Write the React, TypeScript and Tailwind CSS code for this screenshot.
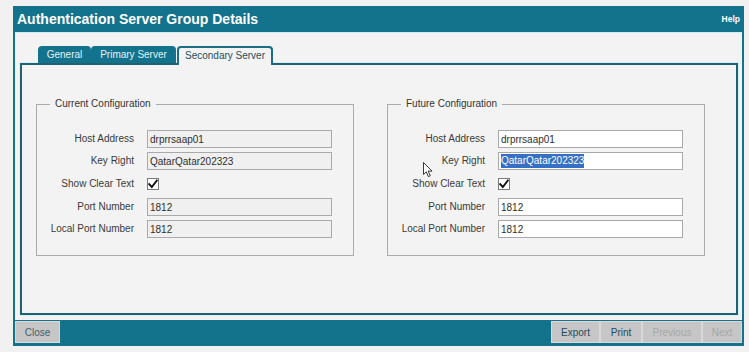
import React from "react";

const Check = () => (
  <div className="w-[12px] h-[12px] bg-white border border-[#7a7a7a] flex items-center justify-center">
    <svg width="10" height="10" viewBox="0 0 10 10">
      <path d="M1.2 5.2 L3.8 8 L8.8 1.6" fill="none" stroke="#111" strokeWidth="1.9" strokeLinecap="square" />
    </svg>
  </div>
);

type Row = { label: string; value?: string; checkbox?: boolean };

const rows: Row[] = [
  { label: "Host Address", value: "drprrsaap01" },
  { label: "Key Right", value: "QatarQatar202323" },
  { label: "Show Clear Text", checkbox: true },
  { label: "Port Number", value: "1812" },
  { label: "Local Port Number", value: "1812" },
];

function Config({ title, disabled, withCursor }: { title: string; disabled: boolean; withCursor?: boolean }) {
  return (
    <fieldset className="relative w-[318px] border border-[#ababab] p-0 pt-[20px] pb-[17px] m-0">
      <legend className="ml-[13px] px-[5px] text-[10px] leading-[12px] text-[#333]">{title}</legend>
      <div className="flex flex-col gap-[4px]">
        {rows.map((r) => (
          <div key={r.label} className={`flex items-center gap-[13px] ${r.checkbox ? "h-[20px]" : "h-[18px]"}`}>
            <div className="w-[97px] text-right text-[10px] text-[#3a3a3a] leading-none">{r.label}</div>
            {r.checkbox ? (
              <Check />
            ) : (
              <div
                className={`w-[185px] h-[18px] border border-[#a9a9a9] pl-[2px] flex items-center text-[10px] text-[#2e2e2e] ${
                  disabled ? "bg-[#f0f0f0]" : "bg-white"
                }`}
              >
                {!disabled && r.label === "Key Right" ? (
                  <span className="bg-[#3570c4] text-white leading-[14px]">{r.value}</span>
                ) : (
                  r.value
                )}
              </div>
            )}
          </div>
        ))}
      </div>
      {withCursor && (
        <svg className="absolute left-[35px] top-[52px]" width="11" height="16" viewBox="0 0 11 16">
          <path d="M0.5 0.5 L0.5 12.5 L3.3 9.8 L5.4 14.6 L7.3 13.8 L5.2 9.1 L9 9.1 Z" fill="#fff" stroke="#222" strokeWidth="0.9" strokeLinejoin="round" />
        </svg>
      )}
    </fieldset>
  );
}

export default function App() {
  return (
    <div className="w-[749px] h-[352px] bg-[#f1f1f1] pt-[6px] pl-[13px] font-['Liberation_Sans',Arial,sans-serif] overflow-hidden">
      <div className="w-[731px] bg-[#13728c] px-[2px] pb-0 flex flex-col">
        <div className="h-[26px] flex items-center justify-between px-[2px]">
          <span className="text-white font-bold text-[14px] leading-none">Authentication Server Group Details</span>
          <span className="text-white font-bold text-[8.5px] leading-none">Help</span>
        </div>
        <div className="border-t border-[#cdeff4] bg-[#f3f3f3] h-[288px] pt-[13px] pl-[5px] pr-[4px]">
          <div className="flex pl-[18px] h-[17px] items-end">
            <div className="w-[53px] h-[17px] bg-[#13728c] rounded-t-[4px] text-[10px] text-[#e4f2f5] flex items-center justify-center">General</div>
            <div className="w-[85px] h-[17px] bg-[#13728c] rounded-t-[4px] text-[10px] text-[#e4f2f5] flex items-center justify-center">Primary Server</div>
            <div className="ml-[1px] w-[96px] h-[19px] -mb-[2px] relative z-10 bg-[#f3f3f3] border-2 border-b-0 border-[#1b6d85] rounded-t-[4px] text-[10px] text-[#234f5c] flex items-center justify-center pb-[2px]">
              Secondary Server
            </div>
          </div>
          <div className="border-2 border-[#1f6373] h-[252px] pt-[33px] pl-[14px] flex items-start gap-[33px] shadow-[0_0_0_1px_#d5f1f5]">
            <Config title="Current Configuration" disabled />
            <Config title="Future Configuration" disabled={false} withCursor />
          </div>
        </div>
        <div className="h-[26px] flex justify-between items-start pt-[1px]">
          <button className="w-[45px] h-[22px] bg-[#c6c6c6] border border-[#d9d9d9] text-[10px] text-[#3f5f6a]">Close</button>
          <div className="flex">
            <button className="w-[49px] h-[22px] bg-[#c6c6c6] border border-[#d9d9d9] text-[10px] text-[#1d4c5c]">Export</button>
            <button className="w-[42px] h-[22px] bg-[#c6c6c6] border border-[#d9d9d9] text-[10px] text-[#1d4c5c]">Print</button>
            <button className="w-[60px] h-[22px] bg-[#c6c6c6] border border-[#d9d9d9] text-[10px] text-[#a6a6a6]">Previous</button>
            <button className="w-[40px] h-[22px] bg-[#c6c6c6] border border-[#d9d9d9] text-[10px] text-[#a6a6a6]">Next</button>
          </div>
        </div>
      </div>
    </div>
  );
}
